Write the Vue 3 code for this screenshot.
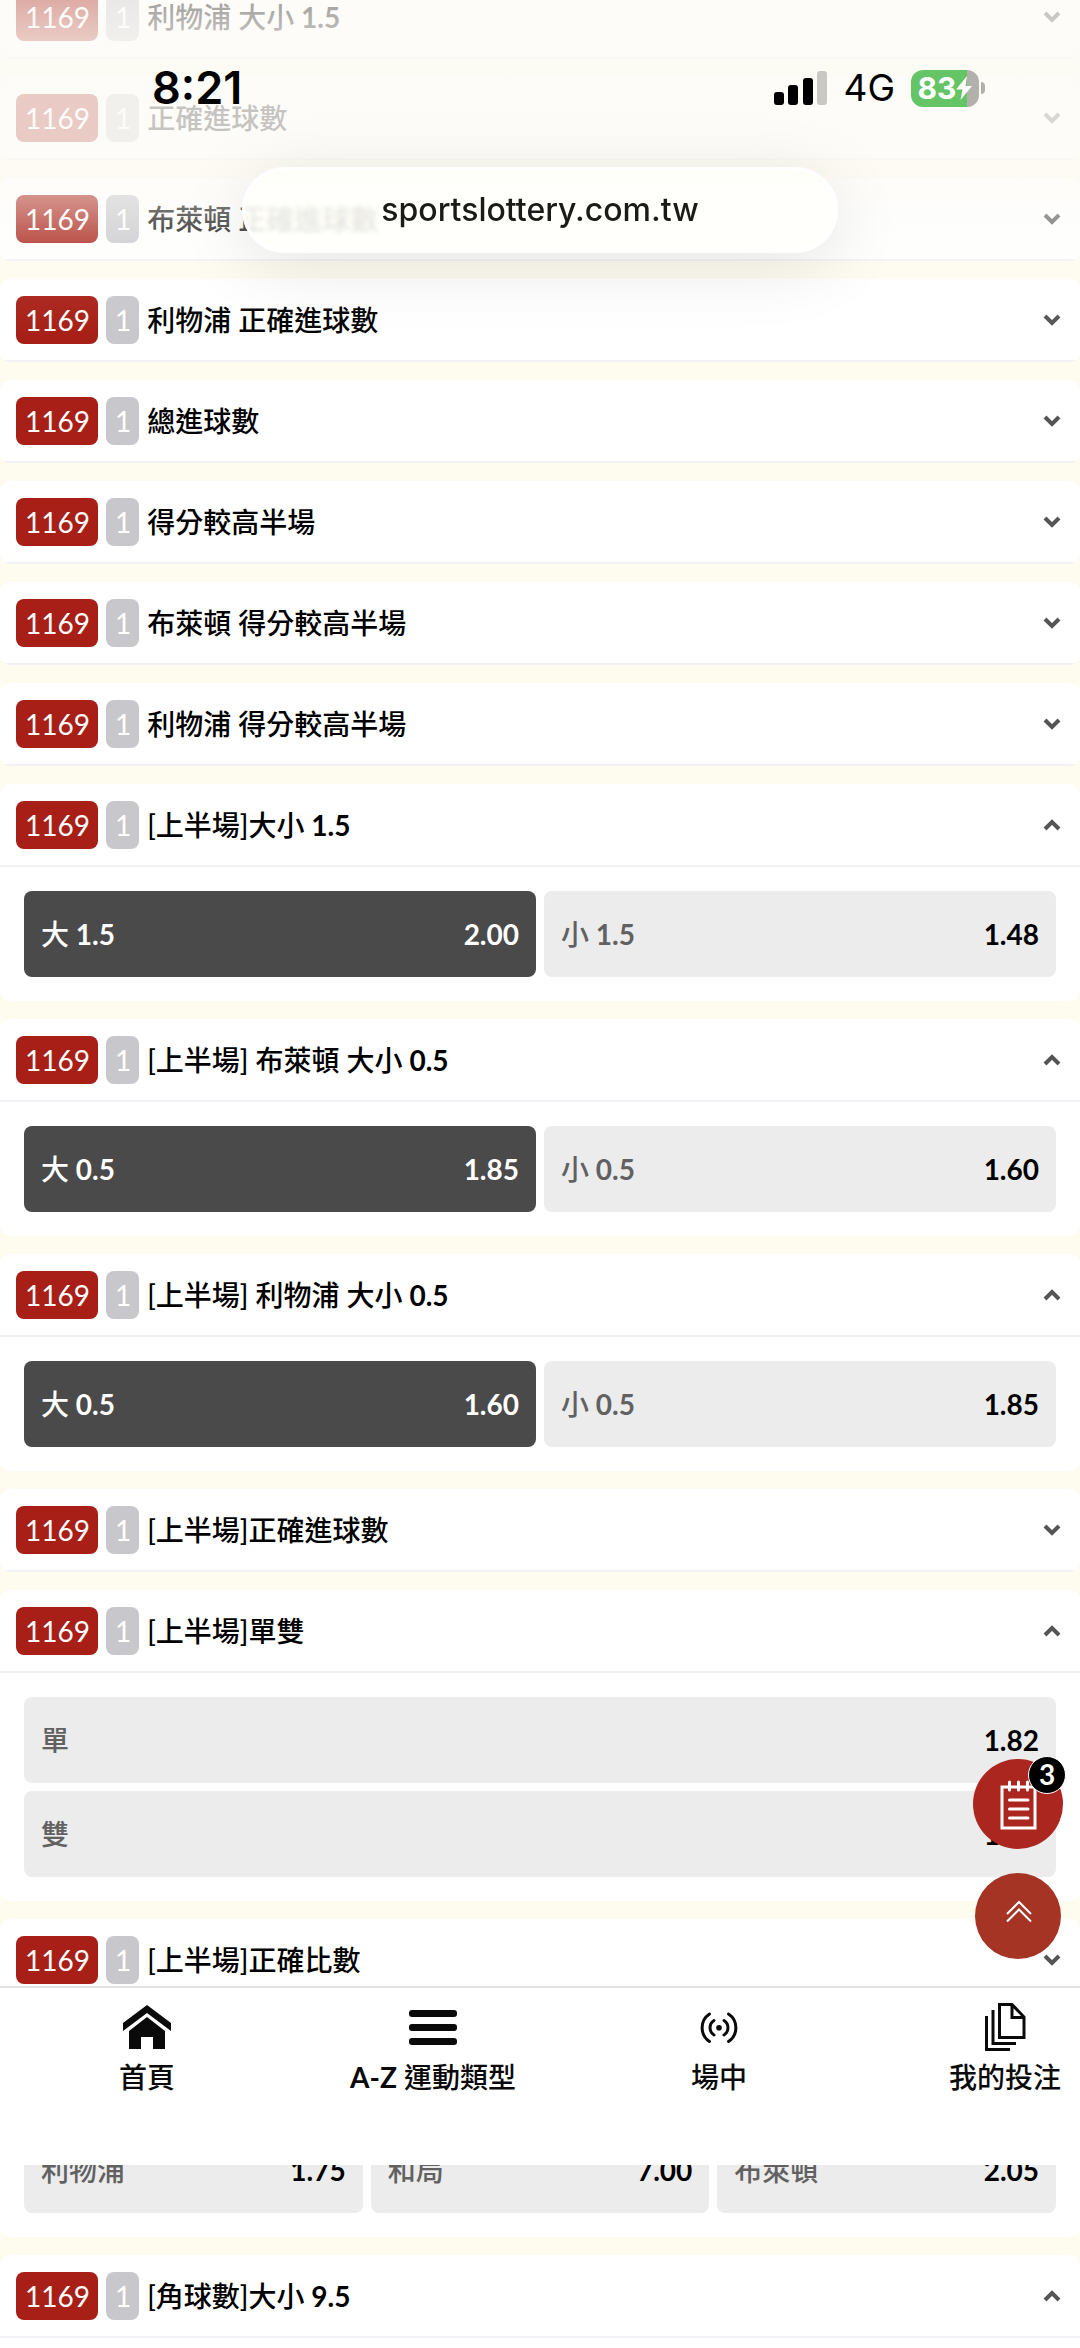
<script setup>
import { reactive } from 'vue'

const markets = reactive([
  { title: '利物浦 大小 1.5', rows: [] },
  { title: '正確進球數', rows: [] },
  { title: '布萊頓 正確進球數', rows: [] },
  { title: '利物浦 正確進球數', rows: [] },
  { title: '總進球數', rows: [] },
  { title: '得分較高半場', rows: [] },
  { title: '布萊頓 得分較高半場', rows: [] },
  { title: '利物浦 得分較高半場', rows: [] },
  {
    title: '[上半場]大小 1.5',
    open: true,
    rows: [[{ name: '大 1.5', odds: '2.00', picked: true }, { name: '小 1.5', odds: '1.48' }]]
  },
  {
    title: '[上半場] 布萊頓 大小 0.5',
    open: true,
    rows: [[{ name: '大 0.5', odds: '1.85', picked: true }, { name: '小 0.5', odds: '1.60' }]]
  },
  {
    title: '[上半場] 利物浦 大小 0.5',
    open: true,
    rows: [[{ name: '大 0.5', odds: '1.60', picked: true }, { name: '小 0.5', odds: '1.85' }]]
  },
  { title: '[上半場]正確進球數', rows: [] },
  {
    title: '[上半場]單雙',
    open: true,
    rows: [[{ name: '單', odds: '1.82' }], [{ name: '雙', odds: '1.63' }]]
  },
  { title: '[上半場]正確比數', rows: [] },
  {
    title: '[角球數]不讓分',
    open: true,
    rows: [[{ name: '利物浦', odds: '1.75' }, { name: '和局', odds: '7.00' }, { name: '布萊頓', odds: '2.05' }]]
  },
  {
    title: '[角球數]大小 9.5',
    open: true,
    rows: [[{ name: '大 9.5', odds: '1.70' }, { name: '小 9.5', odds: '1.75' }]]
  }
])

// Odd entries are the numeric runs, which are set bolder than the Chinese text.
const split = (text) => text.split(/( ?\d+\.\d+)/)
</script>

<template>
  <div class="screen" lang="zh-Hant">
    <main class="markets">
      <section v-for="market in markets" :key="market.title" class="card">
        <h2 class="heading">
          <button
            type="button"
            class="toggle"
            :class="{ expanded: market.open }"
            :aria-expanded="!!market.open"
            @click="market.open = !market.open"
          >
            <span class="code">1169</span>
            <span class="code single">1</span>
            <span class="title"><span v-for="(part, i) in split(market.title)" :key="i" :class="{ number: i % 2 }">{{ part }}</span></span>
            <svg class="chevron" viewBox="0 0 18 12" aria-hidden="true">
              <path d="M2 2 9 9 16 2" />
            </svg>
          </button>
        </h2>
        <div v-if="market.open" class="odds">
          <div v-for="(row, i) in market.rows" :key="i" class="odds-row">
            <button
              v-for="pick in row"
              :key="pick.name"
              type="button"
              class="pick"
              :class="{ picked: pick.picked }"
              :aria-pressed="!!pick.picked"
              @click="pick.picked = !pick.picked"
            >
              <span class="name"><span v-for="(part, n) in split(pick.name)" :key="n" :class="{ number: n % 2 }">{{ part }}</span></span>
              <span class="number">{{ pick.odds }}</span>
            </button>
          </div>
        </div>
      </section>
    </main>

    <header class="top">
      <div class="status">
        <span class="time">8:21</span>
        <div class="signals">
          <svg class="bars" viewBox="0 0 53 34" aria-hidden="true">
            <rect x="0" y="21" width="10" height="13" rx="3" />
            <rect x="14" y="14" width="10" height="20" rx="3" />
            <rect x="29" y="7" width="10" height="27" rx="3" />
            <rect class="off" x="43" y="0" width="10" height="34" rx="3" />
          </svg>
          <span class="network">4G</span>
          <span class="battery">
            <span class="cell">
              <span class="level">83</span>
              <svg class="bolt" viewBox="0 0 16 24" aria-hidden="true">
                <path d="M11 0 0 13.500H6.500L4.500 24 16 10H9.500Z" />
              </svg>
            </span>
            <span class="nub"></span>
          </span>
        </div>
      </div>
      <button type="button" class="address">sportslottery.com.tw</button>
    </header>

    <div class="floating">
      <button type="button" class="fab slip" aria-label="投注單">
        <svg viewBox="0 0 90 90" aria-hidden="true">
          <path d="M29 28H62V69H29Z" />
          <path d="M36.500 23V31M45.500 23V31M54.500 23V31M36.500 41H55M36.500 50H55M36.500 59H55" />
        </svg>
        <span class="count">3</span>
      </button>
      <button type="button" class="fab to-top" aria-label="回到頂端">
        <svg viewBox="0 0 86 86" aria-hidden="true">
          <path d="M32 41 44 29 56 41M32 48.500 44 36.500 56 48.500" />
        </svg>
      </button>
    </div>

    <nav class="tabs">
      <a class="tab" href="#home">
        <svg viewBox="0 0 48 48" aria-hidden="true">
          <path d="M24 2 48 20V28L24 10 0 28V20Z" />
          <path d="M24 14 42 28V46H30V34H18V46H6V28Z" />
        </svg>
        <span>首頁</span>
      </a>
      <a class="tab" href="#sports">
        <svg viewBox="0 0 48 48" aria-hidden="true">
          <rect y="7" width="48" height="7" rx="3" />
          <rect y="21" width="48" height="7" rx="3" />
          <rect y="35" width="48" height="7" rx="3" />
        </svg>
        <span><span class="number">A-Z</span> 運動類型</span>
      </a>
      <a class="tab" href="#live">
        <svg class="line" viewBox="0 0 48 48" aria-hidden="true">
          <path d="M14.500 11A16.500 16.500 0 0 0 14.500 38.500M33.500 11A16.500 16.500 0 0 1 33.500 38.500" />
          <path d="M19 17.500A8.600 8.600 0 0 0 19 32M29 17.500A8.600 8.600 0 0 1 29 32" />
          <circle class="dot" cx="24" cy="24.700" r="2.800" />
        </svg>
        <span>場中</span>
      </a>
      <a class="tab" href="#bets">
        <svg class="line square" viewBox="0 0 48 48" aria-hidden="true">
          <path d="M18.500 1.500H31L43 14V34.500H18.500ZM31 1.500V14.500H43" />
          <path d="M12 7V40.500H35M5.500 13V46.500H29" />
        </svg>
        <span>我的投注</span>
      </a>
    </nav>
  </div>
</template>

<style>
body {
  margin: 0;
  background: #fefbef;
}
</style>

<style scoped>
.screen {
  position: relative;
  height: 100vh;
  overflow: hidden;
  background: #fefbef;
  color: #000;
  font-family: Lato, "Noto Sans CJK TC", sans-serif;
  font-size: 28px;
  line-height: 40px;
}

button {
  margin: 0;
  padding: 0;
  border: 0;
  background: none;
  color: inherit;
  font: inherit;
  text-align: left;
  cursor: pointer;
}

.markets {
  display: flex;
  flex-direction: column;
  gap: 18px;
  margin-top: -24px;
}

.card {
  flex: none;
  overflow: hidden;
  border-radius: 10px;
  background: #fff;
}

.heading {
  margin: 0;
  font-size: 28px;
  font-weight: 500;
}

.toggle {
  display: flex;
  align-items: center;
  box-sizing: border-box;
  width: 100%;
  height: 83px;
  padding: 0 19px 0 16px;
  border-bottom: 2px solid #f1f1f6;
}

.code {
  margin-right: 8px;
  padding: 0 8px 0 9px;
  border-radius: 8px;
  background: #a71f16;
  color: #fff;
  font-weight: 400;
  line-height: 48px;
}

.single {
  background: #c8c7cc;
}

.title {
  flex: 1;
}

.title,
.name {
  white-space: pre-wrap;
}

.number {
  font-weight: 700;
}

.chevron {
  width: 18px;
  height: 12px;
  fill: none;
  stroke: #555;
  stroke-width: 4;
}

.expanded .chevron {
  transform: rotate(180deg);
}

.odds {
  display: flex;
  flex-direction: column;
  gap: 8px;
  padding: 24px;
}

.odds-row {
  display: flex;
  gap: 8px;
}

.pick {
  display: flex;
  flex: 1;
  align-items: center;
  justify-content: space-between;
  height: 86px;
  padding: 0 17px;
  border-radius: 8px;
  background: #ececec;
}

.name {
  color: #616161;
  font-weight: 500;
}

.picked {
  background: #4a4a4a;
  color: #fff;
}

.picked .name {
  color: #fff;
}

.top {
  position: absolute;
  top: 0;
  left: 0;
  right: 0;
  display: flex;
  flex-direction: column;
  align-items: center;
  height: 340px;
  background: linear-gradient(
    rgba(252, 251, 246, 0.64) 0,
    rgba(252, 251, 246, 0.78) 40px,
    rgba(252, 251, 246, 0.78) 145px,
    rgba(252, 251, 246, 0.5) 200px,
    rgba(252, 251, 246, 0.24) 243px,
    rgba(252, 251, 246, 0.06) 290px,
    rgba(252, 251, 246, 0) 340px
  );
  font-family: Inter, sans-serif;
  pointer-events: none;
}

.status {
  display: flex;
  align-items: flex-start;
  justify-content: space-between;
  box-sizing: border-box;
  width: 100%;
  height: 167px;
  padding: 64px 95px 0 152px;
}

.time {
  font-size: 45px;
  font-weight: 600;
  line-height: 48px;
}

.signals {
  display: flex;
  align-items: center;
  gap: 16px;
  height: 48px;
}

.bars {
  width: 53px;
  height: 34px;
}

.off {
  fill: #c9c8c3;
}

.network {
  font-size: 37px;
  line-height: 48px;
}

.battery {
  display: flex;
  align-items: center;
  gap: 2px;
}

.cell {
  display: flex;
  align-items: center;
  justify-content: center;
  width: 68px;
  height: 37px;
  border-radius: 12px;
  background: linear-gradient(90deg, #65c466 83%, #b1b0ab 83%);
  color: #fff;
}

.level {
  font-size: 30px;
  font-weight: 700;
  line-height: 37px;
}

.bolt {
  width: 16px;
  height: 24px;
  fill: #fff;
}

.nub {
  width: 4px;
  height: 12px;
  border-radius: 0 4px 4px 0;
  background: #b1b0ab;
}

.address {
  box-sizing: border-box;
  width: 596px;
  max-width: 90%;
  height: 86px;
  border: 3px solid #fff;
  border-radius: 44px;
  background: rgba(255, 255, 250, 0.84);
  box-shadow: 0 12px 70px rgba(0, 0, 0, 0.1);
  backdrop-filter: blur(2px);
  color: #1a1a18;
  font-size: 32px;
  font-weight: 500;
  text-align: center;
  pointer-events: auto;
}

.floating {
  position: absolute;
  right: 17px;
  bottom: 389px;
  display: flex;
  flex-direction: column;
  align-items: center;
  gap: 24px;
}

.fab {
  position: relative;
  border-radius: 50%;
}

.fab svg {
  display: block;
  fill: none;
  stroke: #fff;
}

.slip {
  width: 90px;
  height: 90px;
  background: #ac2620;
}

.slip svg {
  stroke-width: 3;
  stroke-linecap: round;
}

.to-top {
  width: 86px;
  height: 86px;
  background: #a53425;
}

.to-top svg {
  stroke-width: 2;
}

.count {
  position: absolute;
  top: -3px;
  right: -3px;
  box-sizing: border-box;
  width: 38px;
  height: 38px;
  border: 1px solid #fff;
  border-radius: 50%;
  background: #000;
  color: #fff;
  font-size: 28px;
  font-weight: 700;
  line-height: 34px;
  text-align: center;
}

.tabs {
  position: absolute;
  left: 0;
  right: 0;
  bottom: 183px;
  display: flex;
  box-sizing: border-box;
  height: 179px;
  padding: 15px 0 0 4px;
  overflow: hidden;
  border-top: 2px solid #e4e4e4;
  background: #fff;
}

.tab {
  display: flex;
  flex: 0 0 286px;
  flex-direction: column;
  align-items: center;
  gap: 6px;
  color: #0a0a0a;
  font-weight: 500;
  text-decoration: none;
}

.tab svg {
  width: 48px;
  height: 48px;
  fill: #0a0a0a;
}

.tab .line {
  fill: none;
  stroke: #0a0a0a;
  stroke-width: 3;
  stroke-linecap: round;
}

.tab .square {
  stroke-linecap: butt;
}

.tab .dot {
  fill: #0a0a0a;
  stroke: none;
}
</style>
